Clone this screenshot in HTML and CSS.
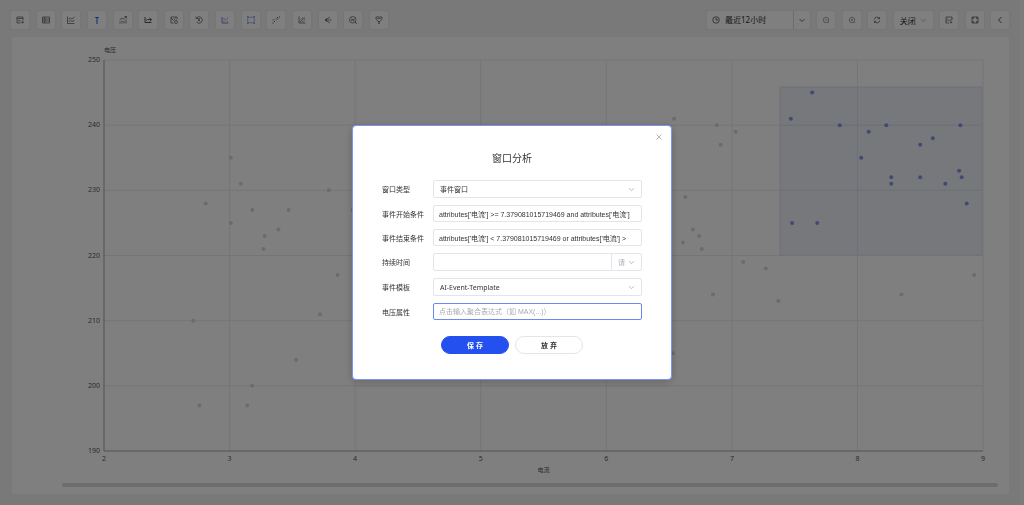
FILE: index.html
```html
<!DOCTYPE html>
<html lang="zh-CN">
<head>
    <meta charset="utf-8">
    <title>窗口分析</title>
    <meta name="viewport" content="width=device-width, initial-scale=1">
    <link rel="stylesheet" href="styles.css">
</head>
<body>
    <header class="toolbar">
        <div class="tools">
            <button class="tool" type="button" aria-label="保存"><svg class="icon" viewBox="0 0 16 16"><path d="M14 9V2H2v12h6M2 5h12M4 9.5h5M9 12.5h6M12.5 10l2.5 2.5-2.5 2.5"/></svg></button>
            <button class="tool" type="button" aria-label="表格"><svg class="icon" viewBox="0 0 16 16"><path d="M1 2h14v12H1zM1 6h14M1 10h14M5.5 2v12"/></svg></button>
            <button class="tool" type="button" aria-label="趋势"><svg class="icon" viewBox="0 0 16 16"><path d="M1 1v14h14M3 6l4-2 3 2 5-4M3 11l4-2 3 2 5-2"/></svg></button>
            <button class="tool active" type="button" aria-label="上限"><svg class="icon" viewBox="0 0 16 16"><path d="M8 16V2M4.5 3h7" stroke-width="2"/></svg></button>
            <button class="tool" type="button" aria-label="柱状图"><svg class="icon" viewBox="0 0 16 16"><path d="M2 15v-4M6 15V9M10 15v-5M14 15V7M1 8l5-4 3 2 6-5M11 1h4v4"/></svg></button>
            <button class="tool" type="button" aria-label="预测"><svg class="icon" viewBox="0 0 16 16"><path d="M2 2v11h13M4 9l3-2h7M11 4l4 3-3 4" stroke-width="2"/></svg></button>
            <button class="tool" type="button" aria-label="图片"><svg class="icon" viewBox="0 0 16 16"><path d="M14 7V2H2v12h5M2 4l5 5M7 5l3 3M10 4h2"/><circle cx="12" cy="12" r="3"/></svg></button>
            <button class="tool" type="button" aria-label="历史"><svg class="icon" viewBox="0 0 16 16"><path d="M3 4a6.5 6.5 0 1 1 0 8M2 1v4h4M5.5 5.5h5M8 5.5V11M6 8.5h4"/></svg></button>
            <button class="tool picked" type="button" aria-label="散点图"><svg class="icon" viewBox="0 0 16 16"><path d="M2 2v12h13M5 10h2M8 7h2M12 4h2M5 5h2M11 10h2" stroke-width="2"/></svg></button>
            <button class="tool picked" type="button" aria-label="框选"><svg class="icon" viewBox="0 0 16 16"><path d="M0 1h3v3H0zM13 1h3v3h-3zM0 12h3v3H0zM13 12h3v3h-3zM5 2.5h6M5 13.5h6M1.5 6v4M14.5 6v4"/></svg></button>
            <button class="tool" type="button" aria-label="取消框选"><svg class="icon" viewBox="0 0 16 16"><path d="M1 8h2M4 11h2M1 14h2M6 7l2-2M10 3h2M11 6h2M14 2h2M9 8h1" stroke-width="2"/></svg></button>
            <button class="tool" type="button" aria-label="回归"><svg class="icon" viewBox="0 0 16 16"><path d="M2 1v13h13M4 12L14 3M5 6h2M8 4h2M9 11h2M12 8h2"/></svg></button>
            <button class="tool" type="button" aria-label="分支"><svg class="icon" viewBox="0 0 16 16"><path d="M15 8H3M12 2L3 8l9 6M6 5L2 8l4 3"/></svg></button>
            <button class="tool" type="button" aria-label="分析"><svg class="icon" viewBox="0 0 16 16"><circle cx="7.5" cy="7.5" r="6.5"/><path d="M4 10l3-4 2 3 2-4M5 5l5 6M12 12l4 4"/></svg></button>
            <button class="tool" type="button" aria-label="筛选"><svg class="icon" viewBox="0 0 16 16"><path d="M2 2h12v4l-4 5H6L2 6zM5 5h6M8 11v4M6 14.5h4"/></svg></button>
        </div>
        <div class="tools tools-right">
            <div class="range">
                <button class="range-main" type="button"><svg class="icon" viewBox="0 0 16 16"><circle cx="8" cy="8" r="6.5"/><path d="M8 4v4h4"/></svg>最近12小时</button>
                <button class="range-more" type="button" aria-label="更多"><svg class="icon" viewBox="0 0 16 16"><path d="M3 6l5 5 5-5"/></svg></button>
            </div>
            <button class="tool" type="button" aria-label="缩小"><svg class="icon light" viewBox="0 0 16 16"><circle cx="8" cy="8" r="5.5"/><path d="M5.5 8h5M12 12l2 2"/></svg></button>
            <button class="tool" type="button" aria-label="放大"><svg class="icon light" viewBox="0 0 16 16"><circle cx="8" cy="8" r="5.5"/><path d="M5.5 8h5M8 5.5v5M12 12l2 2"/></svg></button>
            <button class="tool" type="button" aria-label="刷新"><svg class="icon" viewBox="0 0 16 16"><path d="M2.5 7A5.5 5.5 0 0 1 13 5.5M13.5 9A5.5 5.5 0 0 1 3 10.5M13 2v3.5H9.5M3 14v-3.5h3.5"/></svg></button>
            <select class="refresh" aria-label="自动刷新"><option>关闭</option></select>
            <button class="tool" type="button" aria-label="导出图片"><svg class="icon" viewBox="0 0 16 16"><path d="M14 8V2H2v12h6M2 11l4-4 3 3 5-5M5 5h1M12 9v5M9.5 12l2.5 2.5 2.5-2.5"/></svg></button>
            <button class="tool" type="button" aria-label="全屏"><svg class="icon" viewBox="0 0 16 16"><path d="M2 2h12v12H2zM2 5h3V2M11 2v3h3M14 11h-3v3M5 14v-3H2"/></svg></button>
            <button class="tool" type="button" aria-label="收起"><svg class="icon" viewBox="0 0 16 16"><path d="M11 2L5 8l6 6" stroke-width="2"/></svg></button>
        </div>
    </header>

    <main class="panel">
        <svg id="chart" class="chart" viewBox="0 0 997 457" role="img" aria-label="电流与电压散点图"></svg>
    </main>

    <div class="mask">
        <form class="dialog" role="dialog" aria-labelledby="dialog-title">
            <button class="close" type="button" aria-label="关闭"><svg class="icon" viewBox="0 0 16 16"><path d="M3 3l10 10M13 3L3 13"/></svg></button>
            <h1 id="dialog-title" class="title">窗口分析</h1>
            <div class="fields">
                <div class="field">
                    <label for="window-type">窗口类型</label>
                    <select id="window-type" class="control select"><option>事件窗口</option></select>
                </div>
                <div class="field">
                    <label for="start">事件开始条件</label>
                    <input id="start" class="control" type="text" value="attributes['电流'] &gt;= 7.379081015719469 and attributes['电流']">
                </div>
                <div class="field">
                    <label for="end">事件结束条件</label>
                    <input id="end" class="control" type="text" value="attributes['电流'] &lt; 7.379081015719469 or attributes['电流'] &gt;">
                </div>
                <div class="field">
                    <label for="duration">持续时间</label>
                    <div class="group">
                        <input id="duration" class="control" type="text">
                        <select class="control select unit" aria-label="时间单位"><option>请</option></select>
                    </div>
                </div>
                <div class="field">
                    <label for="template">事件模板</label>
                    <select id="template" class="control select"><option>AI-Event-Template</option></select>
                </div>
                <div class="field">
                    <label for="voltage">电压属性</label>
                    <input id="voltage" class="control focused" type="text" placeholder="点击输入聚合表达式（如 MAX(...)）">
                </div>
            </div>
            <div class="actions">
                <button class="btn primary" type="submit">保 存</button>
                <button class="btn" type="button">放 弃</button>
            </div>
        </form>
    </div>

    <script>
        var points = [
            [3.01, 235], [3.09, 231], [2.81, 228], [3.18, 227], [3.47, 227], [3.79, 230],
            [3.01, 225], [3.39, 224], [3.28, 223], [3.27, 221], [2.71, 210], [3.72, 211],
            [3.86, 217], [3.53, 204], [3.18, 200], [2.76, 197], [3.14, 197], [3.98, 227],
            [6.54, 241], [6.88, 240], [7.03, 239], [6.91, 237], [6.63, 229], [6.69, 224],
            [6.74, 223], [6.61, 222], [6.76, 221], [7.09, 219], [7.27, 218], [6.85, 214],
            [7.37, 213], [8.35, 214], [8.93, 217], [6.53, 205]
        ];
        var selected = [
            [7.47, 241], [7.64, 245], [7.86, 240], [8.09, 239], [8.23, 240], [8.50, 237],
            [8.60, 238], [8.82, 240], [8.03, 235], [8.27, 232], [8.27, 231], [8.50, 232],
            [8.70, 231], [8.81, 233], [8.83, 232], [8.87, 228], [7.48, 225], [7.68, 225]
        ];
        var left = 92, right = 971, top_ = 23, bottom = 414;

        function px(v) {
            return Math.round((left + (v - 2) / 7 * (right - left)) * 10) / 10;
        }
        function py(v) {
            return Math.round((bottom - (v - 190) / 60 * (bottom - top_)) * 10) / 10;
        }
        function line(cls, x1, y1, x2, y2) {
            return '<line class="' + cls + '" x1="' + x1 + '" y1="' + y1 + '" x2="' + x2 + '" y2="' + y2 + '"/>';
        }
        function text(cls, x, y, s) {
            return '<text class="' + cls + '" x="' + x + '" y="' + y + '">' + s + '</text>';
        }
        function dots(cls, list) {
            return list.map(function (p) {
                return '<circle class="' + cls + '" cx="' + px(p[0]) + '" cy="' + py(p[1]) + '" r="2"/>';
            }).join('');
        }

        var out = '';
        for (var v = 3; v <= 9; v++) {
            out += line('grid', px(v), top_, px(v), bottom);
        }
        for (v = 200; v <= 250; v += 10) {
            out += line('grid', left, py(v), right, py(v));
        }
        out += line('axis', left, top_, left, bottom) + line('axis', left, bottom, right, bottom);
        for (v = 2; v <= 9; v++) {
            out += text('tick tick-x', px(v), bottom + 10, v);
        }
        for (v = 190; v <= 250; v += 10) {
            out += text('tick tick-y', left - 4, py(v) + 2, v);
        }
        out += text('name', left, 15, '电压') + text('name name-x', (left + right) / 2, 435, '电流');
        out += dots('dot', points);
        out += '<rect class="brush" x="768" y="50" width="202" height="168"/>';
        out += dots('dot dot-on', selected);
        out += '<rect class="zoom-bar" x="50" y="446" width="936" height="4" rx="2"/>';
        document.getElementById('chart').innerHTML = out;
    </script>
</body>
</html>
```
FILE: styles.css
```css
* {
    box-sizing: border-box;
}
body {
    margin: 0;
    min-height: 100vh;
    background: #f2f2f2;
    border-right: 4px solid #f8f8f8;
    color: #333;
    font-family: "Noto Sans", "Noto Sans CJK SC", sans-serif;
    font-size: 7px;
}
button,
input,
select {
    margin: 0;
    padding: 0;
    border: 0;
    color: inherit;
    font: inherit;
}
button {
    cursor: pointer;
}
.icon {
    display: block;
    flex: none;
    width: 8px;
    height: 8px;
    fill: none;
    stroke: currentColor;
    stroke-width: 1.4;
}
.icon.light {
    opacity: .7;
}

/* toolbar */
.toolbar {
    display: flex;
    justify-content: space-between;
    padding: 11px 11px 8px;
}
.tools {
    display: flex;
    justify-content: space-between;
    width: 377px;
}
.tools-right {
    width: 302px;
}
.tool,
.range,
.refresh {
    height: 18px;
    background-color: #fff;
    border-radius: 2px;
    box-shadow: 0 0 2px rgba(0, 0, 0, .1);
}
.tool {
    display: flex;
    align-items: center;
    justify-content: center;
    width: 18px;
    color: #555;
}
.tool.active {
    color: #2450f0;
}
.tool.picked {
    color: #7088d8;
}
.range {
    display: flex;
    width: 103px;
    font-size: 8px;
}
.range button {
    display: flex;
    align-items: center;
    background: none;
}
.range-main {
    flex: 1;
    gap: 5px;
    padding-left: 5px;
    line-height: 10px;
}
.range .range-more {
    justify-content: center;
    width: 17px;
    border-left: 1px solid #ddd;
}
.refresh {
    width: 39px;
    padding-left: 6px;
    font-size: 8px;
}
.select,
.refresh {
    -webkit-appearance: none;
    appearance: none;
    background-image: url("data:image/svg+xml,%3Csvg xmlns='http://www.w3.org/2000/svg' viewBox='0 0 12 12' fill='none' stroke='%23aaa' stroke-width='1.4'%3E%3Cpath d='M2 4l4 4 4-4'/%3E%3C/svg%3E");
    background-repeat: no-repeat;
    background-position: right 6px center;
    background-size: 7px 7px;
}

/* chart */
.panel {
    margin: 0 11px 0 12px;
    background: #fff;
    border-radius: 2px;
}
.chart {
    display: block;
    width: 100%;
    height: auto;
}
.grid {
    stroke: #e8ebf3;
}
.axis {
    stroke: #a2a2a6;
}
.chart text {
    fill: #55575e;
}
.tick {
    font-size: 7px;
}
.name {
    font-size: 6px;
}
.tick-x,
.name-x {
    text-anchor: middle;
}
.tick-y {
    text-anchor: end;
}
.dot {
    fill: #d6d6d6;
}
.dot-on {
    fill: #8094e6;
}
.brush {
    fill: rgba(120, 140, 190, .13);
    stroke: #dde2f0;
}
.zoom-bar {
    fill: #dadada;
}

/* dialog */
.mask {
    position: fixed;
    inset: 0;
    display: flex;
    align-items: center;
    justify-content: center;
    background: rgba(0, 0, 0, .5);
}
.dialog {
    position: relative;
    width: 320px;
    padding: 24px 29px 25px;
    background: #fff;
    border: 1px solid #7b93f5;
    border-radius: 4px;
    box-shadow: 0 2px 8px rgba(0, 0, 0, .2);
}
.close {
    position: absolute;
    top: 7px;
    right: 8px;
    background: none;
    color: #999;
}
.title {
    margin: 0 0 14px;
    font-size: 10px;
    font-weight: 400;
    line-height: 16px;
    text-align: center;
}
.fields {
    display: grid;
    gap: 7px;
}
.field {
    display: grid;
    grid-template-columns: 51px 1fr;
    align-items: center;
}
.control {
    width: 100%;
    min-width: 0;
    height: 17px;
    padding: 0 5px;
    background-color: #fff;
    border: 1px solid #e3e5ea;
    border-radius: 2px;
}
input.control {
    font-family: "Liberation Sans", "Noto Sans CJK SC", sans-serif;
}
.control::placeholder {
    color: #a8abb2;
}
.select {
    height: 18px;
    padding-left: 6px;
}
.control.focused {
    border-color: #6c88f7;
}
.group {
    display: flex;
}
.group input {
    height: 18px;
    border-radius: 2px 0 0 2px;
}
.group .unit {
    flex: none;
    width: 31px;
    margin-left: -1px;
    border-radius: 0 2px 2px 0;
    color: #a8abb2;
}
.actions {
    display: flex;
    justify-content: center;
    gap: 6px;
    margin-top: 16px;
}
.btn {
    width: 68px;
    height: 18px;
    background: #fff;
    border: 1px solid #e3e5ea;
    border-radius: 9px;
    font-weight: 700;
}
.primary {
    background: #2450f0;
    border-color: #2450f0;
    color: #fff;
}
```
